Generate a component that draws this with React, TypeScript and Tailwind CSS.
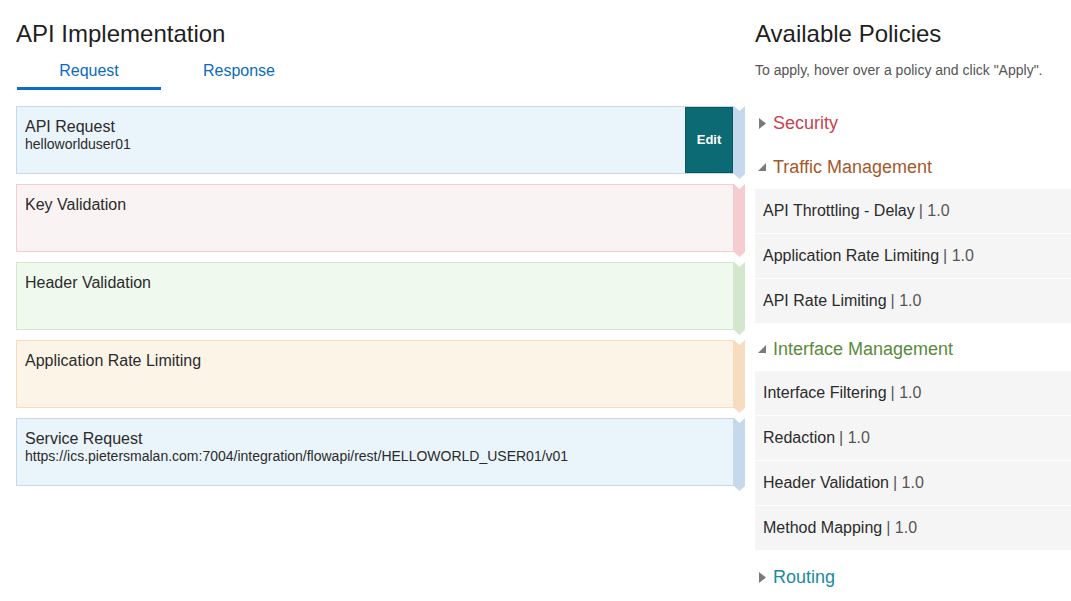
import React from "react";

type Card = {
  title: string;
  sub?: string;
  bg: string;
  border: string;
  strip: string;
  edit?: boolean;
};

const cards: Card[] = [
  { title: "API Request", sub: "helloworlduser01", bg: "bg-[#eaf4fb]", border: "border-[#c6d9ec]", strip: "bg-[#c6d9ec]", edit: true },
  { title: "Key Validation", bg: "bg-[#faf3f3]", border: "border-[#f5cdd1]", strip: "bg-[#f5cdd1]" },
  { title: "Header Validation", bg: "bg-[#f0f9ee]", border: "border-[#d2e7cc]", strip: "bg-[#d2e7cc]" },
  { title: "Application Rate Limiting", bg: "bg-[#fdf4e8]", border: "border-[#f8dcc0]", strip: "bg-[#f8dcc0]" },
  {
    title: "Service Request",
    sub: "https://ics.pietersmalan.com:7004/integration/flowapi/rest/HELLOWORLD_USER01/v01",
    bg: "bg-[#eaf4fb]",
    border: "border-[#c6d9ec]",
    strip: "bg-[#c6d9ec]",
  },
];

function Right() {
  return (
    <svg width="8" height="11" viewBox="0 0 8 11" className="shrink-0">
      <polygon points="0,0 7,5.5 0,11" fill="#7a7a7a" />
    </svg>
  );
}
function Down() {
  return (
    <svg width="10" height="10" viewBox="0 0 10 10" className="shrink-0">
      <polygon points="9,1 9,9 1,9" fill="#7a7a7a" />
    </svg>
  );
}

function Header({ label, color, open, className = "" }: { label: string; color: string; open?: boolean; className?: string }) {
  return (
    <div className={`h-[44px] flex items-center gap-[6px] ${open ? "pl-[2px]" : "pl-[4px]"} ${className}`}>
      {open ? <Down /> : <Right />}
      <span className={`text-[18px] ${color}`}>{label}</span>
    </div>
  );
}

function Item({ name }: { name: string }) {
  return (
    <div className="h-[44px] bg-[#f5f5f5] flex items-center pl-[8px] text-[16px] text-[#2b2b2b]">
      <span>{name}</span>
      <span className="text-[#555] ml-[4px]">| 1.0</span>
    </div>
  );
}

export default function App() {
  return (
    <div className="w-[1071px] h-[601px] bg-white overflow-hidden flex font-['Liberation_Sans',Arial,sans-serif] text-[#333]">
      <div className="w-[745px] pl-[16px] pt-[19px]">
        <h1 className="text-[24px] leading-[30px] text-[#1f1f1f]">API Implementation</h1>
        <div className="flex mt-[6px] h-[35px]">
          <div className="w-[144px] ml-[1px] flex items-center justify-center text-[16px] text-[#0b6bbf] border-b-[3px] border-[#0a6fc2]">
            Request
          </div>
          <div className="w-[156px] flex items-center justify-center text-[16px] text-[#0b6bbf] pb-[3px]">
            Response
          </div>
        </div>
        <div className="mt-[16px] flex flex-col gap-[10px]">
          {cards.map((c, i) => (
            <div key={i} className="flex items-start">
              <div className={`flex-1 h-[68px] border ${c.border} ${c.bg} flex`}>
                <div className="flex-1 pl-[8px] pt-[10px]">
                  <div className="text-[16px] leading-[19px] text-[#2b2b2b]">{c.title}</div>
                  {c.sub && <div className="text-[14px] leading-[16px] text-[#2b2b2b]">{c.sub}</div>}
                </div>
                {c.edit && (
                  <div className="w-[48px] h-full bg-[#0c6a75] border border-[#0a5560] flex items-center justify-center text-white font-bold text-[13px]">
                    Edit
                  </div>
                )}
              </div>
              <div
                className={`w-[11px] h-[73px] -mb-[5px] ${c.strip} [clip-path:polygon(0_0,50%_5px,100%_0,100%_calc(100%-5px),50%_100%,0_calc(100%-5px))]`}
              />
            </div>
          ))}
        </div>
      </div>
      <div className="flex-1 pl-[10px] pt-[19px]">
        <h2 className="text-[24px] leading-[30px] text-[#1f1f1f]">Available Policies</h2>
        <p className="mt-[12px] text-[14px] leading-[18px] text-[#555]">To apply, hover over a policy and click "Apply".</p>
        <div className="mt-[22px]">
          <Header label="Security" color="text-[#c8434f]" />
          <Header label="Traffic Management" color="text-[#a5582a]" open />
          <div className="flex flex-col gap-[1px]">
            <Item name="API Throttling - Delay" />
            <Item name="Application Rate Limiting" />
            <Item name="API Rate Limiting" />
          </div>
          <Header label="Interface Management" color="text-[#5a8a3a]" open className="mt-[4px]" />
          <div className="flex flex-col gap-[1px]">
            <Item name="Interface Filtering" />
            <Item name="Redaction" />
            <Item name="Header Validation" />
            <Item name="Method Mapping" />
          </div>
          <Header label="Routing" color="text-[#1a8aa0]" className="mt-[5px]" />
        </div>
      </div>
    </div>
  );
}
